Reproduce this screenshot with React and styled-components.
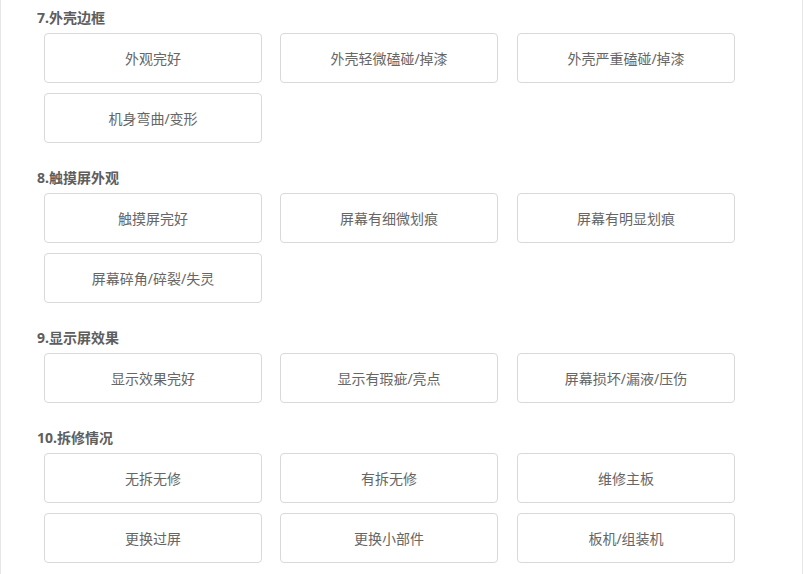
import React from "react";
import styled, { createGlobalStyle } from "styled-components";

const Global = createGlobalStyle`
  html, body { margin: 0; padding: 0; background: #fff; }
  body { font-family: "Noto Sans", "Noto Sans CJK SC", sans-serif; }
`;

const Page = styled.div`
  box-sizing: border-box;
  width: 803px;
  min-height: 574px;
  border-left: 1px solid #e6e6e6;
  border-right: 1px solid #e6e6e6;
  padding: 0 0 0 36px;
`;

const Section = styled.section`
  padding: 8px 0 7px 0;
`;

const Heading = styled.div`
  height: 20px;
  line-height: 20px;
  font-size: 14px;
  font-weight: bold;
  color: #5e5e5e;
  margin-bottom: 5px;
`;

const Grid = styled.div`
  display: grid;
  grid-template-columns: 218px 218px 219px;
  column-gap: 18px;
  row-gap: 10px;
  padding-left: 7px;
  margin-bottom: 10px;
  & > :nth-child(3n) { justify-self: end; width: 218px; }
`;

const Option = styled.div`
  box-sizing: border-box;
  height: 50px;
  border: 1px solid #d9d9d9;
  border-radius: 4px;
  display: flex;
  align-items: center;
  justify-content: center;
  font-size: 14px;
  color: #666;
  background: #fff;
  font-family: "Noto Sans", "Noto Sans CJK SC", sans-serif;
`;

const sections = [
  { title: "7.外壳边框", items: ["外观完好", "外壳轻微磕碰/掉漆", "外壳严重磕碰/掉漆", "机身弯曲/变形"] },
  { title: "8.触摸屏外观", items: ["触摸屏完好", "屏幕有细微划痕", "屏幕有明显划痕", "屏幕碎角/碎裂/失灵"] },
  { title: "9.显示屏效果", items: ["显示效果完好", "显示有瑕疵/亮点", "屏幕损坏/漏液/压伤"] },
  { title: "10.拆修情况", items: ["无拆无修", "有拆无修", "维修主板", "更换过屏", "更换小部件", "板机/组装机"] },
];

export default function App() {
  return (
    <>
      <Global />
      <Page>
        {sections.map((s) => (
          <Section key={s.title}>
            <Heading>{s.title}</Heading>
            <Grid>
              {s.items.map((it) => (
                <Option key={it}>{it}</Option>
              ))}
            </Grid>
          </Section>
        ))}
      </Page>
    </>
  );
}
